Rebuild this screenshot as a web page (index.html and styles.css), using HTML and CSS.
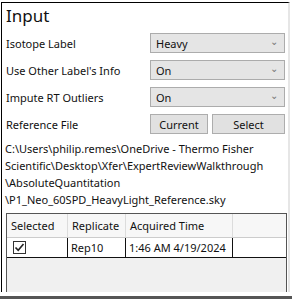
FILE: index.html
```html
<!DOCTYPE html>
<html>
  <head>
    <meta charset="utf-8">
    <meta name="viewport" content="width=device-width, initial-scale=1">
    <title>Input</title>
    <link rel="stylesheet" href="styles.css">
  </head>
  <body>
    <div class="panel">
      <p class="title">Input</p>
      <div class="form">
        <div class="row">
          <span class="label">Isotope Label</span>
          <div class="combo"><span>Heavy</span><span class="chev">&#8964;</span></div>
        </div>
        <div class="row">
          <span class="label">Use Other Label's Info</span>
          <div class="combo"><span>On</span><span class="chev">&#8964;</span></div>
        </div>
        <div class="row">
          <span class="label">Impute RT Outliers</span>
          <div class="combo"><span>On</span><span class="chev">&#8964;</span></div>
        </div>
        <div class="row">
          <span class="label">Reference File</span>
          <div class="buttons">
            <button class="btn btn-current">Current</button>
            <button class="btn btn-select">Select</button>
          </div>
        </div>
      </div>
      <p class="path">C:\Users\philip.remes\OneDrive - Thermo Fisher<br>Scientific\Desktop\Xfer\ExpertReviewWalkthrough<br>\AbsoluteQuantitation<br>\P1_Neo_60SPD_HeavyLight_Reference.sky</p>
      <div class="grid">
        <div class="grid-row head">
          <div class="cell c1">Selected</div>
          <div class="cell c2">Replicate</div>
          <div class="cell c3">Acquired Time</div>
          <div class="cell c4"></div>
        </div>
        <div class="grid-row data">
          <div class="cell c1">
            <span class="check">
              <svg width="11" height="11" viewBox="0 0 11 11"><path d="M1.5 5.5 L4.2 8.3 L9.5 2" fill="none" stroke="#222" stroke-width="1.6"/></svg>
            </span>
          </div>
          <div class="cell c2">Rep10</div>
          <div class="cell c3">1:46 AM 4/19/2024</div>
          <div class="cell c4"></div>
        </div>
      </div>
    </div>
    <div class="bottom-bar"></div>
  </body>
</html>
```
FILE: styles.css
```css
* {
  font-family: "Noto Sans", "Open Sans", sans-serif;
  box-sizing: border-box;
}

body {
  margin: 0;
  background: #fff;
  width: 292px;
  height: 300px;
  overflow: hidden;
  color: #111;
  font-size: 11px;
}

.panel {
  margin: 2px 2px 0 1px;
  height: 290px;
  border-top: 1px solid #000;
  border-left: 1px solid #000;
  border-right: 2px solid #e6e6e6;
  display: flex;
  flex-direction: column;
}

.title {
  margin: 2px 0 0 4px;
  font-size: 17px;
  line-height: 22px;
}

.form {
  margin-top: 6px;
  display: flex;
  flex-direction: column;
  gap: 7px;
}

.row {
  display: flex;
  align-items: center;
  height: 20px;
}

.label {
  width: 148px;
  padding-left: 4px;
}

.combo {
  width: 135px;
  height: 20px;
  background: #e5e5e5;
  border: 1px solid #acacac;
  display: flex;
  align-items: center;
  justify-content: space-between;
  padding: 0 6px 0 5px;
}

.chev {
  color: #777;
  font-size: 10px;
  line-height: 10px;
  margin-top: -4px;
}

.buttons {
  display: flex;
  gap: 4px;
  width: 135px;
  height: 20px;
}

.btn {
  height: 20px;
  background: #e1e1e1;
  border: 1px solid #adadad;
  font-size: 11px;
  color: #111;
  padding: 0;
}

.btn-current {
  width: 58px;
}

.btn-select {
  flex: 1;
}

.path {
  margin: 6px 0 0 3px;
  line-height: 17px;
  white-space: nowrap;
}

.grid {
  margin: 5px 1px 0 4px;
  flex: 1;
  background: #f0f0f0;
  border: 1px solid #555;
  border-bottom: none;
}

.grid-row {
  display: flex;
}

.head {
  height: 24px;
  background: #f7f7f7;
  border-bottom: 1px solid #ccc;
}

.head .cell {
  border-right: 1px solid #dcdcdc;
}

.data {
  height: 20px;
  background: #fff;
  border-bottom: 1px solid #111;
}

.data .cell {
  border-right: 1px solid #111;
}

.cell {
  display: flex;
  align-items: center;
  padding-left: 3px;
  white-space: nowrap;
}

.head .cell {
  padding-left: 4px;
}

.c1 {
  width: 61px;
}

.c2 {
  width: 58px;
}

.c3 {
  width: 107px;
}

.c4 {
  flex: 1;
  border-right: none !important;
}

.check {
  margin-left: 3px;
  width: 13px;
  height: 13px;
  border: 1px solid #333;
  background: #fff;
  display: flex;
  align-items: center;
  justify-content: center;
}

.bottom-bar {
  margin-top: 4px;
  height: 3px;
  background: #555;
}
```
